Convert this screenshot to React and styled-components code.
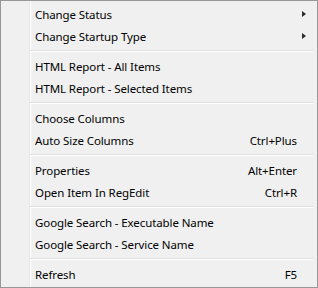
import styled, { createGlobalStyle } from "styled-components";

const Global = createGlobalStyle`
  html, body { margin: 0; padding: 0; background: #ffffff; }
  body { font-family: "Segoe UI", "Noto Sans", "Liberation Sans", sans-serif; }
`;

const Menu = styled.div`
  box-sizing: border-box;
  width: 318px;
  height: 288px;
  border: 1px solid #979797;
  padding: 2px;
  background-color: #f0f0f0;
  background-image: linear-gradient(
    to right,
    transparent 28px,
    #e2e3e3 28px,
    #e2e3e3 29px,
    #ffffff 29px,
    #ffffff 30px,
    transparent 30px
  );
  display: flex;
  flex-direction: column;
`;

const Item = styled.div`
  height: 22px;
  display: flex;
  align-items: center;
  padding-left: 32px;
  font-size: 11.5px;
  letter-spacing: -0.1px;
  color: #000;
  white-space: nowrap;
`;

const Label = styled.span`
  flex: 1;
`;

const Shortcut = styled.span`
  text-align: right;
`;

const ArrowCell = styled.span`
  width: 18px;
  height: 22px;
  display: flex;
  align-items: center;
  padding-left: 5px;
  box-sizing: border-box;
`;

const Arrow = styled.span`
  width: 0;
  height: 0;
  border-top: 3.5px solid transparent;
  border-bottom: 3.5px solid transparent;
  border-left: 4px solid #2b2b2b;
`;

const Separator = styled.div`
  height: 8px;
  display: flex;
  align-items: center;
  margin: 0 1px 0 27px;
  &::before {
    content: "";
    display: block;
    width: 100%;
    height: 1px;
    border-bottom: 1px solid #ffffff;
    background: #e0e0e0;
  }
`;

const groups = [
  [
    { label: "Change Status", sub: true },
    { label: "Change Startup Type", sub: true },
  ],
  [
    { label: "HTML Report - All Items" },
    { label: "HTML Report - Selected Items" },
  ],
  [
    { label: "Choose Columns" },
    { label: "Auto Size Columns", key: "Ctrl+Plus" },
  ],
  [
    { label: "Properties", key: "Alt+Enter" },
    { label: "Open Item In RegEdit", key: "Ctrl+R" },
  ],
  [
    { label: "Google Search - Executable Name" },
    { label: "Google Search - Service Name" },
  ],
  [{ label: "Refresh", key: "F5" }],
];

export default function App() {
  return (
    <>
      <Global />
      <Menu>
        {groups.map((g, gi) => (
          <div key={gi}>
            {gi > 0 && <Separator />}
            {g.map((it) => (
              <Item key={it.label}>
                <Label>{it.label}</Label>
                {it.key && <Shortcut>{it.key}</Shortcut>}
                <ArrowCell>{it.sub && <Arrow />}</ArrowCell>
              </Item>
            ))}
          </div>
        ))}
      </Menu>
    </>
  );
}
